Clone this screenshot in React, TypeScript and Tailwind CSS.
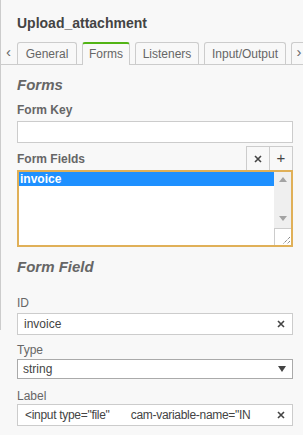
import React from "react";

const XIcon = () => (
  <svg width="8" height="8" viewBox="0 0 8 8" className="block">
    <path d="M1 1 L7 7 M7 1 L1 7" stroke="#444" strokeWidth="1.6" />
  </svg>
);

export default function App() {
  return (
    <div
      className="w-[303px] h-[435px] bg-[#f8f8f8] overflow-hidden relative text-[#666]"
      style={{ fontFamily: '"Liberation Sans", Arial, sans-serif' }}
    >
      <div className="absolute left-0 top-0 w-px h-[330px] bg-[#ccc]" />
      <div className="pl-[17px] pt-[14px] h-[42px] text-[14px] font-bold text-[#444] leading-[18px]">
        Upload_attachment
      </div>
      {/* tabs */}
      <div className="relative h-[23px] border-b border-[#ccc] flex items-end">
        <div className="w-[17px] h-[22px] flex items-center justify-center text-[15px] text-[#666] pb-[2px]">‹</div>
        <div className="flex items-end gap-[5px]">
          <div className="h-[22px] w-[60px] border border-b-0 border-[#ccc] rounded-t-[3px] text-[12px] text-[#666] flex items-center justify-center">General</div>
          <div className="h-[23px] w-[48px] border border-b-0 border-[#ccc] border-t-[2px] border-t-[#52b415] rounded-t-[3px] text-[12px] text-[#666] flex items-center justify-center bg-[#f8f8f8] mb-[-1px] pb-[1px]">Forms</div>
          <div className="h-[22px] w-[64px] border border-b-0 border-[#ccc] rounded-t-[3px] text-[12px] text-[#666] flex items-center justify-center">Listeners</div>
          <div className="h-[22px] w-[82px] border border-b-0 border-[#ccc] rounded-t-[3px] text-[12px] text-[#666] flex items-center justify-center">Input/Output</div>
          <div className="h-[22px] w-[12px] border border-b-0 border-r-0 border-[#ccc] rounded-tl-[3px] text-[15px] text-[#666] flex items-center justify-center pl-[3px] pb-[2px]">›</div>
        </div>
      </div>

      <div className="pl-[17px] pr-[10px]">
        <div className="pt-[11px] text-[15px] font-bold italic text-[#666] leading-[18px]">Forms</div>
        <div className="pt-[8px] text-[12px] font-bold text-[#666] leading-[16px]">Form Key</div>
        <div className="mt-[3px] h-[22px] bg-white border border-[#ccc]" />
        <div className="mt-[3px] flex items-end justify-between">
          <div className="text-[12px] font-bold text-[#666] leading-[16px] pb-[3px]">Form Fields</div>
          <div className="flex h-[24px]">
            <div className="w-[24px] border border-b-0 border-[#ccc] flex items-center justify-center">
              <XIcon />
            </div>
            <div className="w-[23px] border border-l-0 border-b-0 border-[#ccc] flex items-center justify-center text-[15px] text-[#444]">+</div>
          </div>
        </div>
        <div className="h-[77px] bg-white border-2 border-[#e0b058] flex relative">
          <div className="flex-1">
            <div className="h-[14px] bg-[#1e90ff] text-white text-[12px] font-bold leading-[14px] pl-[1px]">invoice</div>
          </div>
          <div className="w-[17px] bg-[#efefef] flex flex-col items-center">
            <svg width="8" height="5" viewBox="0 0 8 5" className="mt-[5px]"><path d="M0 5 L4 0 L8 5 Z" fill="#a3a3a3" /></svg>
            <div className="flex-1" />
            <svg width="8" height="5" viewBox="0 0 8 5" className="mb-[24px]"><path d="M0 0 L4 5 L8 0 Z" fill="#a3a3a3" /></svg>
          </div>
          <div className="absolute right-0 bottom-0 w-[17px] h-[17px] bg-white border-l border-t border-[#ccc]">
            <svg width="17" height="17" viewBox="0 0 17 17">
              <path d="M15 8 L8 15 M15 12 L12 15" stroke="#555" strokeWidth="1" strokeDasharray="1 1" />
            </svg>
          </div>
        </div>

        <div className="pt-[11px] text-[15px] font-bold italic text-[#666] leading-[18px]">Form Field</div>

        <div className="pt-[19px] text-[12px] text-[#666] leading-[16px]">ID</div>
        <div className="mt-[2px] h-[22px] bg-white border border-[#ccc] flex items-center pl-[6px] pr-[7px] text-[12px] text-[#444]">
          <span className="flex-1">invoice</span>
          <XIcon />
        </div>

        <div className="pt-[7px] text-[12px] text-[#666] leading-[16px]">Type</div>
        <div className="mt-[1px] h-[20px] bg-white border border-[#aaa] flex items-center pl-[5px] pr-[6px] text-[12px] text-[#444]">
          <span className="flex-1">string</span>
          <svg width="8" height="6" viewBox="0 0 8 6"><path d="M0 0 L8 0 L4 6 Z" fill="#444" /></svg>
        </div>

        <div className="pt-[9px] text-[12px] text-[#666] leading-[16px]">Label</div>
        <div className="mt-0 h-[22px] bg-white border border-[#ccc] flex items-center pl-[7px] pr-[7px] text-[12px] text-[#444]">
          <span className="flex-1 overflow-hidden whitespace-nowrap tracking-[-0.3px]">&lt;input type="file"&nbsp;&nbsp;&nbsp;&nbsp;&nbsp;&nbsp;&nbsp;cam-variable-name="IN</span>
          <span className="pl-[10px]"><XIcon /></span>
        </div>
      </div>
    </div>
  );
}
